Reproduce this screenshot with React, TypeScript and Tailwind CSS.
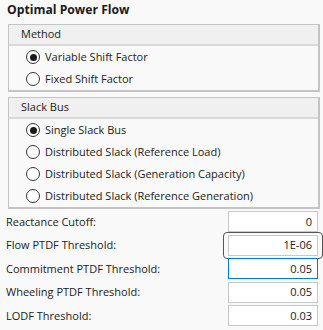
const font = { fontFamily: '"Open Sans", "Noto Sans", sans-serif' };

function Radio({ label, checked }: { label: string; checked?: boolean }) {
  return (
    <div className="flex h-[22px] items-center gap-[5px] pl-[17px]">
      <span className="flex h-[14px] w-[14px] items-center justify-center rounded-full border border-[#333] bg-white">
        {checked && <span className="h-[7px] w-[7px] rounded-full bg-[#1a1a1a]" />}
      </span>
      <span>{label}</span>
    </div>
  );
}

function Group({ title, children }: { title: string; children: React.ReactNode }) {
  return (
    <div className="border border-[#c4c4c4] border-r-2 border-b-2 bg-[#f9f9f9]">
      <div className="flex h-[21px] items-center border-b-2 border-[#d9d9d9] bg-[#f0f0f0] pl-[12px]">
        {title}
      </div>
      <div>{children}</div>
    </div>
  );
}

function Field({ label, value, variant }: { label: string; value: string; variant?: "hover" | "focus" }) {
  const box = variant === "focus" ? "border-[#0078d7]" : "border-[#c8c8c8]";
  return (
    <div className="flex h-[23.5px] items-center justify-between">
      <span className="pl-[6px]">{label}</span>
      <div className="relative mr-[5px]">
        {variant === "hover" && (
          <div className="absolute -inset-x-[5px] -inset-y-[3px] rounded-[4px] border border-[#555]" />
        )}
        <div className={`flex h-[21px] w-[90px] items-center justify-end border bg-white pr-[5px] ${box}`}>
          {value}
        </div>
      </div>
    </div>
  );
}

export default function App() {
  return (
    <div className="h-[330px] w-[323px] bg-[#f9f9f9] text-[11px] text-[#1b1b1b]" style={font}>
      <div className="pl-[7px] pt-[1px] text-[12.2px] font-bold leading-[18px]">Optimal Power Flow</div>
      <div className="ml-[8px] mr-[3px] mt-[5px] space-y-[5px]">
        <Group title="Method">
          <Radio label="Variable Shift Factor" checked />
          <Radio label="Fixed Shift Factor" />
        </Group>
        <Group title="Slack Bus">
          <Radio label="Single Slack Bus" checked />
          <Radio label="Distributed Slack (Reference Load)" />
          <Radio label="Distributed Slack (Generation Capacity)" />
          <Radio label="Distributed Slack (Reference Generation)" />
        </Group>
      </div>
      <div className="mt-[1px]">
        <Field label="Reactance Cutoff:" value="0" />
        <Field label="Flow PTDF Threshold:" value="1E-06" variant="hover" />
        <Field label="Commitment PTDF Threshold:" value="0.05" variant="focus" />
        <Field label="Wheeling PTDF Threshold:" value="0.05" />
        <Field label="LODF Threshold:" value="0.03" />
      </div>
    </div>
  );
}
